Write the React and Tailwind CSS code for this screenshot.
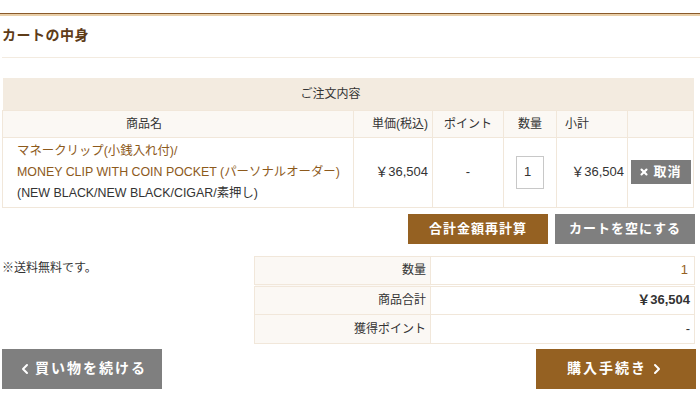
import React from 'react';
import { ChevronLeft, ChevronRight, X } from 'lucide-react';

const font = "font-['Helvetica_Neue','Liberation_Sans','Noto_Sans_CJK_JP',sans-serif]";
const cell = 'border border-[#f1e7da]';

const App = () => {
  return (
    <div className={`w-[700px] h-[400px] bg-white text-[#333] ${font} pl-[2px] pr-[5px] pt-[13px]`}>
      {/* top rule */}
      <div className="border-t border-[#8a5a2b] h-[3px] bg-[#e9cfa9] -ml-[2px] -mr-[5px]" />
      <div className="h-[42px] pb-[3px] flex items-center border-b border-[#f3ebe0] -mr-[5px]">
        <h2 className="text-[14px] font-bold text-[#5e3c18] tracking-[0.5px]">カートの中身</h2>
      </div>

      <table className="mt-[20px] w-[692px] border-collapse text-[12px]">
        <thead>
          <tr className="h-[32px] bg-[#f3ebe0]">
            <th colSpan={6} className="font-normal text-left pl-[298px]">ご注文内容</th>
          </tr>
          <tr className="h-[27px] bg-[#fbf8f4]">
            <th className={`${cell} font-normal w-[351px] text-left pl-[123px]`}>商品名</th>
            <th className={`${cell} font-normal w-[79px] text-right pr-[4px]`}>単価(税込)</th>
            <th className={`${cell} font-normal w-[71px] text-center`}>ポイント</th>
            <th className={`${cell} font-normal w-[53px] text-center`}>数量</th>
            <th className={`${cell} font-normal w-[71px] text-left pl-[8px]`}>小計</th>
            <th className={`${cell} font-normal`}></th>
          </tr>
        </thead>
        <tbody>
          <tr className="h-[70px]">
            <td className={`${cell} pl-[14px] py-[3px] leading-[21px] text-[12.4px]`}>
              <div className="text-[#8d5a1c]">マネークリップ(小銭入れ付)/</div>
              <div className="text-[#8d5a1c]">MONEY CLIP WITH COIN POCKET (パーソナルオーダー)</div>
              <div>(NEW BLACK/NEW BLACK/CIGAR/素押し)</div>
            </td>
            <td className={`${cell} text-right pr-[4px] text-[13px]`}>￥36,504</td>
            <td className={`${cell} text-center text-[13px]`}>-</td>
            <td className={`${cell}`}>
              <div className="flex justify-center">
                <div className="w-[28px] h-[33px] border border-[#c8c8c8] flex items-center pl-[7px] text-[13px]">1</div>
              </div>
            </td>
            <td className={`${cell} text-right pr-[3px] text-[13px]`}>￥36,504</td>
            <td className={`${cell}`}>
              <div className="flex justify-center">
                <button className="w-[60px] h-[24px] bg-[#7b7b7b] text-white font-bold text-[13px] flex items-center justify-center gap-[4px] tracking-[1px]">
                  <X className="w-[10px] h-[10px]" strokeWidth={5} />
                  取消
                </button>
              </div>
            </td>
          </tr>
        </tbody>
      </table>

      <div className="mt-[6px] flex justify-end gap-[7px]">
        <button className="w-[140px] h-[30px] bg-[#956122] text-white font-bold text-[13px] tracking-[1px]">合計金額再計算</button>
        <button className="w-[140px] h-[30px] bg-[#7f7f7f] text-white font-bold text-[13px] tracking-[1px]">カートを空にする</button>
      </div>

      <div className="mt-[12px] flex justify-between items-start">
        <p className="text-[12px] mt-[3px]">※送料無料です。</p>
        <table className="w-[441px] border-collapse text-[12px]">
          <tbody>
            <tr className="h-[29px] border-b-[3px] border-double border-[#f1e7da]">
              <th className={`${cell} bg-[#fbf8f4] font-normal w-[176px] text-right pr-[4px]`}>数量</th>
              <td className={`${cell} text-right pr-[6px] text-[13px] text-[#956122]`}>1</td>
            </tr>
            <tr className="h-[29px]">
              <th className={`${cell} bg-[#fbf8f4] font-normal text-right pr-[4px]`}>商品合計</th>
              <td className={`${cell} text-right pr-[4px] text-[13px] font-bold`}>￥36,504</td>
            </tr>
            <tr className="h-[29px]">
              <th className={`${cell} bg-[#fbf8f4] font-normal text-right pr-[4px]`}>獲得ポイント</th>
              <td className={`${cell} text-right pr-[4px] text-[13px]`}>-</td>
            </tr>
          </tbody>
        </table>
      </div>

      <div className="mt-[5px] flex justify-between -mr-[1px]">
        <button className="w-[160px] h-[40px] bg-[#7f7f7f] text-white font-bold text-[14px] tracking-[2px] flex items-center justify-center gap-[2px]">
          <ChevronLeft className="w-[16px] h-[16px]" strokeWidth={3} />
          買い物を続ける
        </button>
        <button className="w-[160px] h-[40px] bg-[#956122] text-white font-bold text-[14px] tracking-[2px] flex items-center justify-center gap-[2px]">
          購入手続き
          <ChevronRight className="w-[16px] h-[16px]" strokeWidth={3} />
        </button>
      </div>
    </div>
  );
};

export default App;
